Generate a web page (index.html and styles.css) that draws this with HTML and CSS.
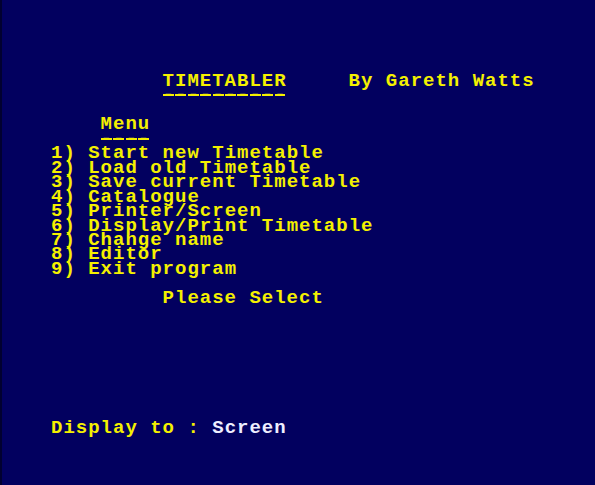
FILE: index.html
```html
<!DOCTYPE html>
<html>
<head>
<meta charset="utf-8">
<link rel="stylesheet" href="styles.css">
</head>
<body>
<div class="screen">
  <div class="line c9">TIMETABLER     By Gareth Watts</div>
  <div class="line c9"><span class="rule">----------</span></div>
  <div class="line c4 skip1">Menu</div>
  <div class="line c4"><span class="rule">----</span></div>
  <div class="line">1) Start new Timetable</div>
  <div class="line">2) Load old Timetable</div>
  <div class="line">3) Save current Timetable</div>
  <div class="line">4) Catalogue</div>
  <div class="line">5) Printer/Screen</div>
  <div class="line">6) Display/Print Timetable</div>
  <div class="line">7) Change name</div>
  <div class="line">8) Editor</div>
  <div class="line">9) Exit program</div>
  <div class="line c9 skip1">Please Select</div>
  <div class="line skip8">Display to : <span class="white">Screen</span></div>
</div>
</body>
</html>
```

FILE: styles.css
```css
html, body {
  margin: 0;
  padding: 0;
}
body {
  width: 595px;
  height: 485px;
  background: #02005f;
  border-left: 2px solid #010030;
  box-sizing: border-box;
  overflow: hidden;
}
.screen {
  display: flex;
  flex-direction: column;
  padding: 74px 0 0 49px;
  font-family: "Liberation Mono", "DejaVu Sans Mono", monospace;
  font-weight: bold;
  font-size: 19px;
  letter-spacing: 1px;
  line-height: 14.46px;
  color: #f4f000;
  white-space: pre;
}
.line {
  height: 14.46px;
}
.c4 { padding-left: 49.6px; }
.c9 { padding-left: 111.6px; }
.skip1 { margin-top: 14.46px; }
.skip8 { margin-top: 115.68px; }
.rule {
  background-image: repeating-linear-gradient(to right, #f4f000 0, #f4f000 10.9px, transparent 10.9px, transparent 12.4px);
  background-size: 100% 2px;
  background-position: 0 9.7px;
  background-repeat: no-repeat;
}
.white {
  color: #eeeeff;
}
```
